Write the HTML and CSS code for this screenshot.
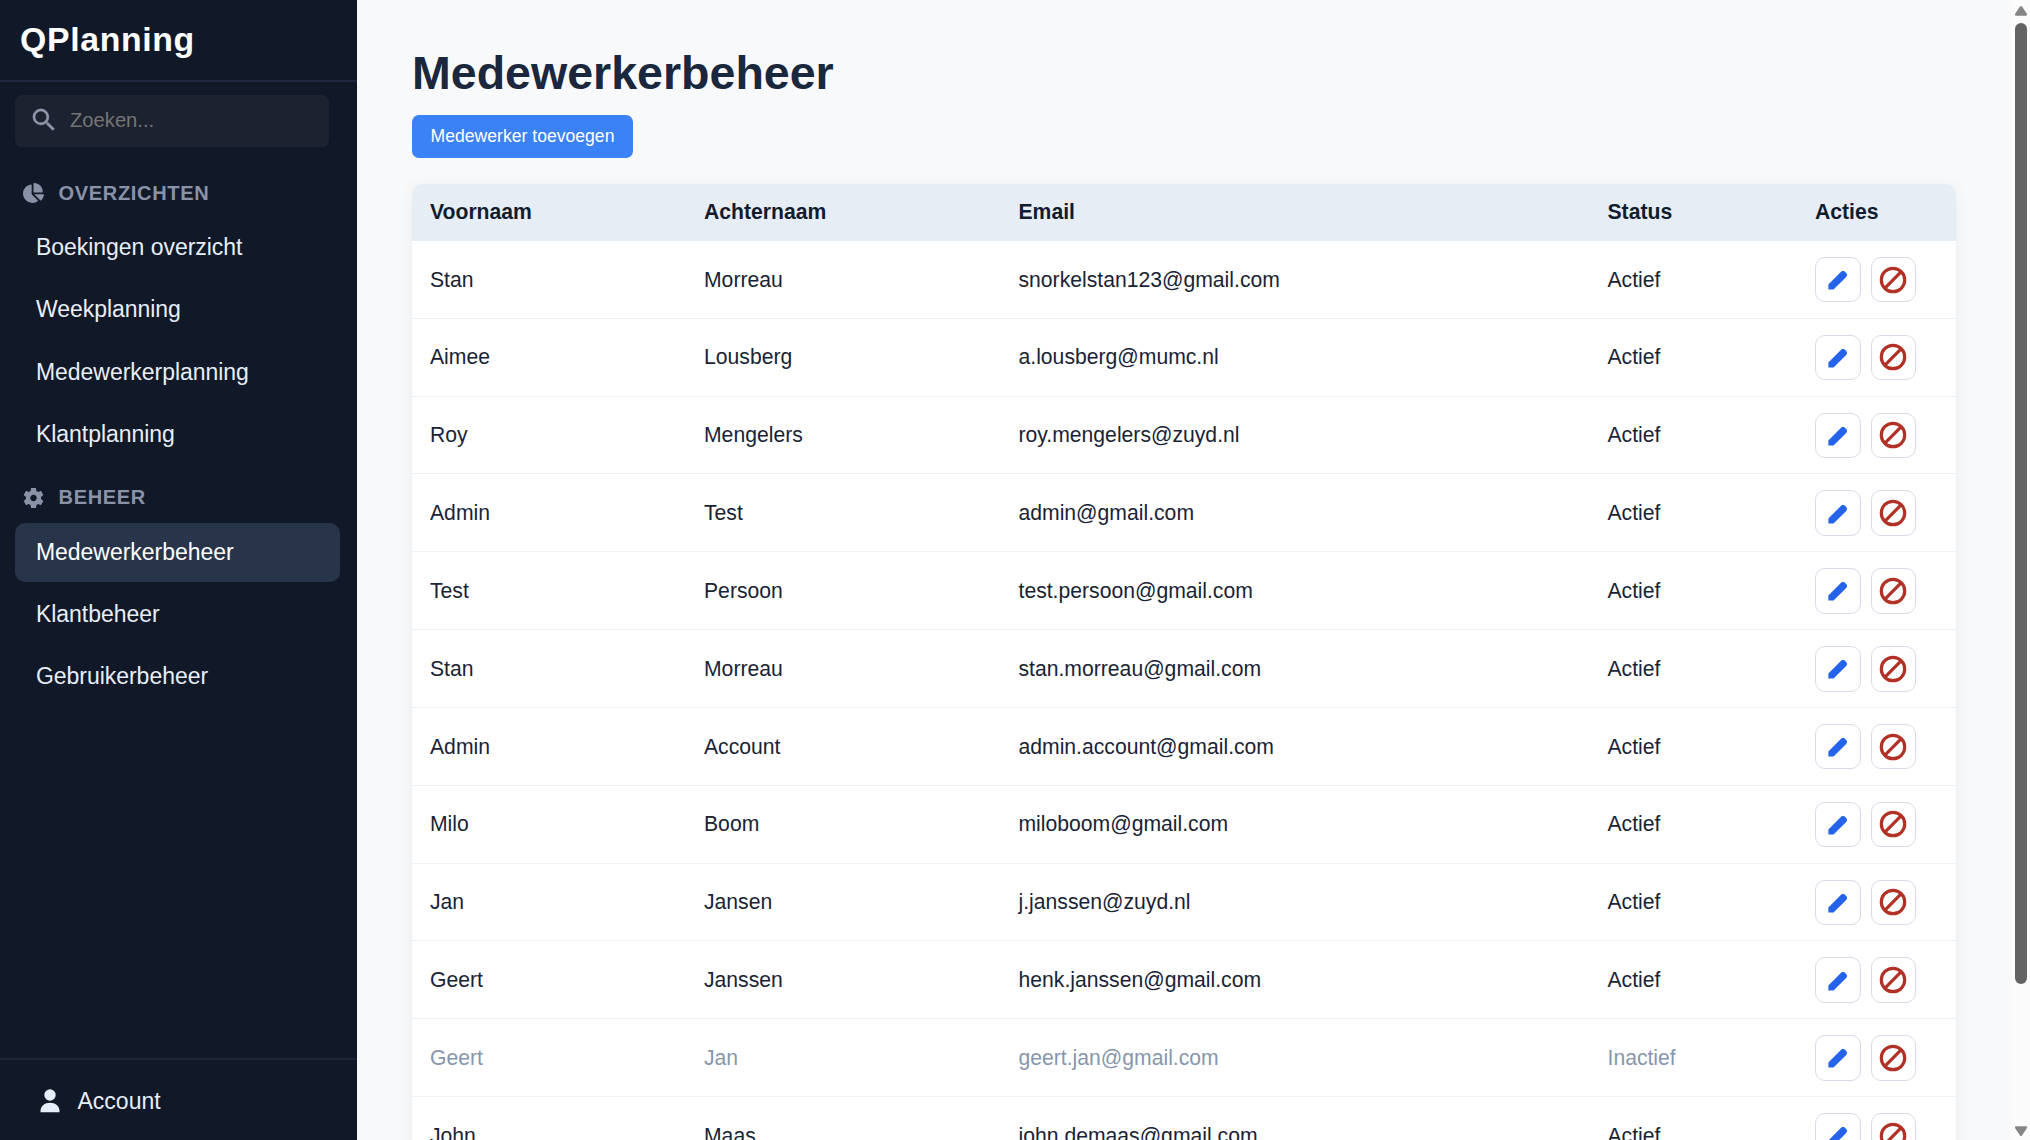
FILE: index.html
```
<!DOCTYPE html>
<html lang="nl">
  <head>
    <meta charset="UTF-8" />
    <meta name="viewport" content="width=device-width, initial-scale=1" />

    <title>QPlanning - Medewerkerbeheer</title>

    <link rel="stylesheet" href="styles.css">
  </head>

  <body>
    <!-- shared icons -->
    <svg class="sprite">
      <symbol id="icon-pencil" viewBox="0 0 20 20">
        <path d="M.4 14.2 13.500 1.100a3.200 3.200 0 0 1 4.600 0l.8.8a3.200 3.200 0 0 1 0 4.600L5.800 19.600H.4z" />
      </symbol>
      <symbol id="icon-ban" viewBox="0 0 28 28">
        <circle cx="14" cy="14" r="11.7" />
        <path d="M6.2 21.8 21.8 6.2" />
      </symbol>
    </svg>

    <aside class="sidebar">
      <div class="logo">QPlanning</div>

      <div class="search">
        <svg class="searchIcon" viewBox="0 0 24 24">
          <path d="M15.5 14h-.79l-.28-.27A6.47 6.47 0 0 0 16 9.5 6.5 6.5 0 1 0 9.5 16c1.61 0 3.09-.59 4.23-1.57l.27.28v.79l5 4.99L20.49 19l-4.99-5zm-6 0C7.01 14 5 11.99 5 9.5S7.01 5 9.5 5 14 7.01 14 9.5 11.99 14 9.5 14z" />
        </svg>
        <input class="searchInput" type="text" placeholder="Zoeken..." />
      </div>

      <nav class="menu">
        <h2 class="menuTitle">
          <svg class="menuIcon" viewBox="32 0 544 512">
            <path d="M304 240V16.600c0-9 7-16.600 16-16.600C443.700 0 544 100.300 544 224c0 9-7.600 16-16.600 16H304zM32 272C32 150.700 122.100 50.300 239 34.300c9.200-1.300 17 6.100 17 15.400V288L412.500 444.500c6.700 6.700 6.200 17.700-1.500 23.100C371.800 495.600 323.800 512 272 512C139.500 512 32 404.600 32 272zm526.400 16c9.300 0 16.600 7.800 15.400 17c-7.700 55.900-34.600 105.600-73.900 142.300c-6 5.600-15.400 5.200-21.200-.7L320 288H558.400z" />
          </svg>
          OVERZICHTEN
        </h2>
        <a class="menuLink" href="#">Boekingen overzicht</a>
        <a class="menuLink" href="#">Weekplanning</a>
        <a class="menuLink" href="#">Medewerkerplanning</a>
        <a class="menuLink" href="#">Klantplanning</a>

        <h2 class="menuTitle">
          <svg class="menuIcon" viewBox="2 2 20 20">
            <path d="M19.140 12.940c.04-.3.06-.61.06-.94 0-.32-.02-.64-.07-.94l2.030-1.580c.18-.14.23-.41.12-.61l-1.920-3.320c-.12-.22-.37-.29-.59-.22l-2.390.96c-.5-.38-1.030-.7-1.620-.94l-.36-2.540c-.04-.24-.24-.41-.48-.41h-3.840c-.24 0-.43.17-.47.41l-.36 2.540c-.59.24-1.130.57-1.620.94l-2.390-.96c-.22-.08-.47 0-.59.22L2.740 8.870c-.12.210-.08.470.12.610l2.030 1.580c-.05.300-.09.630-.09.940s.02.640.07.940l-2.030 1.580c-.18.140-.23.410-.12.610l1.920 3.320c.12.220.37.290.59.220l2.390-.96c.5.380 1.030.7 1.620.94l.36 2.540c.05.240.24.410.48.410h3.840c.24 0 .44-.17.47-.41l.36-2.540c.59-.24 1.130-.56 1.620-.94l2.390.96c.22.080.47 0 .59-.22l1.920-3.320c.12-.22.07-.47-.12-.61l-2.010-1.580zM12 15.100c-1.710 0-3.100-1.390-3.100-3.100s1.390-3.100 3.100-3.100 3.100 1.390 3.100 3.100-1.390 3.100-3.100 3.100z" />
          </svg>
          BEHEER
        </h2>
        <a class="menuLink active" href="#">Medewerkerbeheer</a>
        <a class="menuLink" href="#">Klantbeheer</a>
        <a class="menuLink" href="#">Gebruikerbeheer</a>
      </nav>

      <a class="account" href="#">
        <svg class="accountIcon" viewBox="0 0 20 24">
          <circle cx="10" cy="6" r="5.700" />
          <path d="M.5 23.300v-1.300c0-4.800 4.200-8.200 9.500-8.200s9.500 3.400 9.500 8.200v1.300z" />
        </svg>
        Account
      </a>
    </aside>

    <main class="content">
      <h1>Medewerkerbeheer</h1>
      <button class="addButton" type="button">Medewerker toevoegen</button>

      <table class="employees">
        <thead>
          <tr>
            <th class="colFirst">Voornaam</th>
            <th class="colLast">Achternaam</th>
            <th class="colEmail">Email</th>
            <th class="colStatus">Status</th>
            <th>Acties</th>
          </tr>
        </thead>
        <tbody id="employeeRows"></tbody>
      </table>
    </main>

    <div class="scrollbar">
      <svg class="arrow" viewBox="0 0 14 12"><path d="M6 1.500Q7 .3 8 1.500L13 9Q13.400 10.600 12 10.700H2Q.6 10.600 1 9z" /></svg>
      <div class="thumb"></div>
      <svg class="arrow down" viewBox="0 0 14 12"><path d="M6 1.500Q7 .3 8 1.500L13 9Q13.400 10.600 12 10.700H2Q.6 10.600 1 9z" /></svg>
    </div>

    <script src="script.js"></script>
  </body>
</html>
```

FILE: styles.css
```
*,
*:before,
*:after {
  margin: 0;
  padding: 0;
  box-sizing: border-box;
}

body {
  display: flex;
  height: 100vh;
  overflow: hidden;
  font-family: Arial, "Liberation Sans", sans-serif;
  font-size: 21.16px;
  color: #1a2335;
  background-color: #f7f9fb;
}

.sprite {
  display: none;
}

/* sidebar */
.sidebar {
  display: flex;
  flex-direction: column;
  flex: none;
  width: 356.5px;
  color: #e8eef7;
  background-color: #111827;
}

.logo {
  height: 82px;
  padding: 0 20px;
  font-size: 33.8px;
  font-weight: 700;
  line-height: 78px;
  letter-spacing: 0.66px;
  color: #fff;
  border-bottom: 2px solid #1e2840;
}

.search {
  display: flex;
  align-items: center;
  width: 314px;
  height: 52px;
  margin: 13px 0 0 15px;
  padding: 0 0 2px 14px;
  background-color: #1d2230;
  border-radius: 7px;
}

.searchIcon {
  flex: none;
  width: 30px;
  height: 30px;
  fill: #9197aa;
  stroke: #9197aa;
  stroke-width: 0.2;
}

.searchInput {
  width: 230px;
  margin-left: 11px;
  font-family: inherit;
  font-size: 20.2px;
  color: #e8eef7;
  background: none;
  border: 0;
  outline: 0;
}

.searchInput::placeholder {
  color: #757575;
}

.menu {
  flex: 1;
  padding: 23px 16.5px 0 15px;
}

.menuTitle {
  display: flex;
  align-items: center;
  gap: 15px;
  height: 46px;
  margin-bottom: 2.2px;
  padding-left: 7.5px;
  font-size: 20.06px;
  font-weight: 700;
  letter-spacing: 0.66px;
  color: #8a92a8;
}

.menuLink + .menuTitle {
  margin-top: 10px;
}

.menuIcon {
  width: 21px;
  height: 22px;
  fill: #8a92a8;
}

.menuLink {
  display: block;
  height: 59.5px;
  margin-bottom: 2.8px;
  padding-left: 21px;
  font-size: 23px;
  line-height: 59px;
  letter-spacing: -0.04px;
  color: #e8eef7;
  text-decoration: none;
  border-radius: 10px;
}

.menuLink.active {
  color: #fff;
  background-color: #283449;
}

.account {
  display: flex;
  align-items: center;
  gap: 17.5px;
  height: 82px;
  padding: 2px 0 0 40px;
  font-size: 23px;
  color: #e8eef7;
  text-decoration: none;
  border-top: 2px solid #1e2638;
}

.accountIcon {
  width: 20px;
  height: 24px;
  fill: #e6eefa;
}

/* page content */
.content {
  flex: 1;
  padding: 47px 55px 0 55.5px;
}

h1 {
  font-size: 46.55px;
  line-height: 53px;
  color: #1a273c;
}

.addButton {
  display: block;
  width: 221px;
  height: 43px;
  margin-top: 15px;
  font-family: inherit;
  font-size: 17.6px;
  color: #fff;
  background-color: #3b82f6;
  border: 0;
  border-radius: 7px;
}

.employees {
  width: 1544px;
  margin-top: 26px;
  table-layout: fixed;
  border-spacing: 0;
  background-color: #fff;
  border-radius: 10px;
  box-shadow: 0 3px 16px rgba(15, 23, 42, 0.06);
  overflow: hidden;
}

th {
  height: 57px;
  padding: 0 18px 2px;
  text-align: left;
  color: #111c2e;
  background-color: #e6edf5;
}

td {
  height: 77.84px;
  padding: 0.5px 18px 0;
  border-bottom: 1.32px solid #edf1f5;
}

.colFirst {
  width: 274px;
}

.colLast {
  width: 314.5px;
}

.colEmail {
  width: 589px;
}

.colStatus {
  width: 207.5px;
}

.inactive td {
  color: #8796ab;
}

.actions {
  display: flex;
  gap: 10px;
}

.action {
  display: flex;
  align-items: center;
  justify-content: center;
  width: 45.5px;
  height: 45.5px;
  background-color: #fff;
  border: 1px solid #d9dce6;
  border-radius: 10px;
}

.pencil {
  width: 19px;
  height: 19px;
  margin: 2px 1.5px 0 0;
  fill: #2563eb;
}

.ban {
  width: 28px;
  height: 28px;
  fill: none;
  stroke: #b23127;
  stroke-width: 3.2;
}

/* scrollbar */
.scrollbar {
  display: flex;
  flex-direction: column;
  align-items: center;
  flex: none;
  width: 19px;
  padding: 5px 0 3px;
  background-color: #fbfbfb;
}

.arrow {
  width: 14px;
  height: 12px;
  fill: #858585;
}

.arrow.down {
  margin-top: auto;
  transform: rotate(180deg);
}

.thumb {
  width: 12px;
  height: 961px;
  margin-top: 6px;
  background-color: #636363;
  border-radius: 6px;
}
```

FILE: script.js
```
// -- variables:
var employees = [
    ["Stan", "Morreau", "snorkelstan123@gmail.com", "Actief"],
    ["Aimee", "Lousberg", "a.lousberg@mumc.nl", "Actief"],
    ["Roy", "Mengelers", "roy.mengelers@zuyd.nl", "Actief"],
    ["Admin", "Test", "admin@gmail.com", "Actief"],
    ["Test", "Persoon", "test.persoon@gmail.com", "Actief"],
    ["Stan", "Morreau", "stan.morreau@gmail.com", "Actief"],
    ["Admin", "Account", "admin.account@gmail.com", "Actief"],
    ["Milo", "Boom", "miloboom@gmail.com", "Actief"],
    ["Jan", "Jansen", "j.janssen@zuyd.nl", "Actief"],
    ["Geert", "Janssen", "henk.janssen@gmail.com", "Actief"],
    ["Geert", "Jan", "geert.jan@gmail.com", "Inactief"],
    ["John", "Maas", "john.demaas@gmail.com", "Actief"],
  ],
  rows = "",
  i;

// for building the table rows
for (i = 0; i < employees.length; i++) {
  rows += employees[i][3] === "Inactief" ? '<tr class="inactive">' : "<tr>";
  rows += "<td>" + employees[i].join("</td><td>") + "</td>";
  rows +=
    '<td><div class="actions">' +
    '<button class="action" type="button"><svg class="pencil"><use href="#icon-pencil" /></svg></button>' +
    '<button class="action" type="button"><svg class="ban"><use href="#icon-ban" /></svg></button>' +
    "</div></td></tr>";
}

document.getElementById("employeeRows").innerHTML = rows;
```
